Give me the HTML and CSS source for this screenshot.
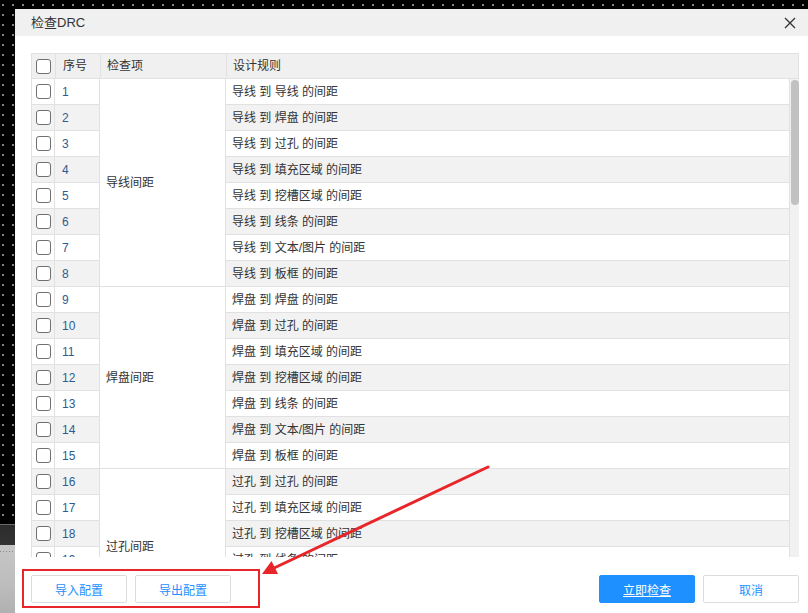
FILE: index.html
```html
<!DOCTYPE html>
<html lang="zh-CN">
<head>
<meta charset="utf-8">
<title>检查DRC</title>
<link rel="stylesheet" href="styles.css">
</head>
<body>
<div class="desk">
  <div class="lower-panel"><div class="dotline"></div></div>
  <div class="dialog">
    <div class="titlebar">
      <span class="title">检查DRC</span>
      <span class="close"><svg width="12" height="12" viewBox="0 0 12 12"><path d="M1 1L11 11M11 1L1 11" stroke="#333" stroke-width="1.3" fill="none"/></svg></span>
    </div>
    <div class="content">
      <div class="grid-wrap">
        <div class="head">
          <div class="cell chk"><span class="cb"></span></div>
          <div class="cell num-h">序号</div>
          <div class="cell">检查项</div>
          <div class="cell">设计规则</div>
        </div>
        <div class="body-row">
          <div class="clip">
            <div class="rows">
              <div class="cell chk"><span class="cb"></span></div><div class="cell num">1</div><div class="cell cat s8">导线间距</div><div class="cell rule">导线 到 导线 的间距</div>
              <div class="cell chk alt"><span class="cb"></span></div><div class="cell num alt">2</div><div class="cell rule alt">导线 到 焊盘 的间距</div>
              <div class="cell chk"><span class="cb"></span></div><div class="cell num">3</div><div class="cell rule">导线 到 过孔 的间距</div>
              <div class="cell chk alt"><span class="cb"></span></div><div class="cell num alt">4</div><div class="cell rule alt">导线 到 填充区域 的间距</div>
              <div class="cell chk"><span class="cb"></span></div><div class="cell num">5</div><div class="cell rule">导线 到 挖槽区域 的间距</div>
              <div class="cell chk alt"><span class="cb"></span></div><div class="cell num alt">6</div><div class="cell rule alt">导线 到 线条 的间距</div>
              <div class="cell chk"><span class="cb"></span></div><div class="cell num">7</div><div class="cell rule">导线 到 文本/图片 的间距</div>
              <div class="cell chk alt"><span class="cb"></span></div><div class="cell num alt">8</div><div class="cell rule alt">导线 到 板框 的间距</div>
              <div class="cell chk"><span class="cb"></span></div><div class="cell num">9</div><div class="cell cat s7">焊盘间距</div><div class="cell rule">焊盘 到 焊盘 的间距</div>
              <div class="cell chk alt"><span class="cb"></span></div><div class="cell num alt">10</div><div class="cell rule alt">焊盘 到 过孔 的间距</div>
              <div class="cell chk"><span class="cb"></span></div><div class="cell num">11</div><div class="cell rule">焊盘 到 填充区域 的间距</div>
              <div class="cell chk alt"><span class="cb"></span></div><div class="cell num alt">12</div><div class="cell rule alt">焊盘 到 挖槽区域 的间距</div>
              <div class="cell chk"><span class="cb"></span></div><div class="cell num">13</div><div class="cell rule">焊盘 到 线条 的间距</div>
              <div class="cell chk alt"><span class="cb"></span></div><div class="cell num alt">14</div><div class="cell rule alt">焊盘 到 文本/图片 的间距</div>
              <div class="cell chk"><span class="cb"></span></div><div class="cell num">15</div><div class="cell rule">焊盘 到 板框 的间距</div>
              <div class="cell chk alt"><span class="cb"></span></div><div class="cell num alt">16</div><div class="cell cat s6">过孔间距</div><div class="cell rule alt">过孔 到 过孔 的间距</div>
              <div class="cell chk"><span class="cb"></span></div><div class="cell num">17</div><div class="cell rule">过孔 到 填充区域 的间距</div>
              <div class="cell chk alt"><span class="cb"></span></div><div class="cell num alt">18</div><div class="cell rule alt">过孔 到 挖槽区域 的间距</div>
              <div class="cell chk"><span class="cb"></span></div><div class="cell num">19</div><div class="cell rule">过孔 到 线条 的间距</div>
              <div class="cell chk alt"><span class="cb"></span></div><div class="cell num alt">20</div><div class="cell rule alt">过孔 到 文本/图片 的间距</div>
              <div class="cell chk"><span class="cb"></span></div><div class="cell num">21</div><div class="cell rule">过孔 到 板框 的间距</div>
            </div>
          </div>
          <div class="scrollbar"><div class="thumb"></div></div>
        </div>
      </div>
      <div class="footer">
        <div class="btns">
          <button class="btn">导入配置</button>
          <button class="btn">导出配置</button>
        </div>
        <div class="btns">
          <button class="btn primary">立即检查</button>
          <button class="btn">取消</button>
        </div>
      </div>
    </div>
  </div>
  <div class="annot-box"></div>
  <svg class="annot-arrow" width="808" height="613" viewBox="0 0 808 613">
    <line x1="488" y1="467" x2="272" y2="569" stroke="#e8262a" stroke-width="3" stroke-linecap="round"/>
    <polygon points="262,574 278,574 271.5,561" fill="#e8262a"/>
  </svg>
</div>
</body>
</html>
```

FILE: styles.css
```css
* { box-sizing: border-box; }
html, body { margin: 0; padding: 0; }
body {
  width: 808px;
  height: 613px;
  overflow: hidden;
  font-family: "Liberation Sans", "Noto Sans CJK SC", sans-serif;
  font-size: 12px;
  color: #333;
}
.desk {
  position: relative;
  width: 808px;
  height: 613px;
  background-color: #000;
  background-image: radial-gradient(circle at 5px 5px, #9a9a9a 0.6px, rgba(0,0,0,0) 1.3px);
  background-size: 10px 10px;
  background-position: -2px 0;
  padding: 9px 0 0 15px;
}
.lower-panel {
  position: absolute;
  left: 0;
  top: 524px;
  width: 15px;
  height: 89px;
  border-top: 1px solid #6a6a6a;
  background: linear-gradient(#2c2c2c 0, #333 20px, #c6c6c6 20px, #bdbdbd 60px, #b0b0b0 89px);
}
.lower-panel .dotline {
  margin-top: 26px;
  height: 1px;
  background-image: linear-gradient(90deg, #888 1px, transparent 1px);
  background-size: 3px 1px;
}
.dialog {
  width: 793px;
  height: 604px;
  background: #fff;
  display: flex;
  flex-direction: column;
}
.titlebar {
  height: 27px;
  background: #f0f0f0;
  display: flex;
  align-items: center;
  justify-content: space-between;
  padding: 0 12px 0 16px;
}
.title {
  font-size: 13px;
  color: #333;
  line-height: 16px;
}
.close { display: flex; width: 12px; height: 12px; }
.content {
  padding: 17px 9px 0 16px;
}
.grid-wrap {
  width: 768px;
}
.head {
  display: grid;
  grid-template-columns: 24px 45px 126px 1fr;
  grid-auto-rows: 25px;
  border-top: 1px solid #e1e1e1;
  border-left: 1px solid #e1e1e1;
  background: #f0f0f0;
}
.cell {
  border-right: 1px solid #e1e1e1;
  border-bottom: 1px solid #e1e1e1;
  display: flex;
  align-items: center;
  padding-left: 6px;
  line-height: 16px;
  white-space: nowrap;
  color: #333;
}
.cell.chk {
  padding-left: 0;
  justify-content: center;
}
.cb {
  display: block;
  width: 15px;
  height: 15px;
  border: 1px solid #707070;
  border-radius: 3px;
  background: #fff;
}
.body-row {
  display: flex;
  height: 478px;
}
.clip {
  width: 759px;
  height: 478px;
  overflow: hidden;
  border-left: 1px solid #e1e1e1;
}
.rows {
  display: grid;
  grid-template-columns: 23px 45px 126px 1fr;
  grid-auto-rows: 26px;
}
.rows .chk { grid-column: 1; }
.rows .num { grid-column: 2; color: #2f5b8f; padding-left: 7px; }
.rows .cat { grid-column: 3; padding-left: 6px; }
.rows .rule { grid-column: 4; }
.rows .s8 { grid-row: span 8; }
.rows .s7 { grid-row: span 7; }
.rows .s6 { grid-row: span 6; }
.alt { background: #f2f2f2; }
.head .num-h { padding-left: 7px; }
.scrollbar {
  width: 9px;
  height: 478px;
  background: #f1f1f1;
  padding: 1px 1px 0 1px;
}
.thumb {
  width: 8px;
  height: 125px;
  background: #c1c1c1;
  border-radius: 4px;
}
.footer {
  margin-top: 18px;
  width: 768px;
  display: flex;
  justify-content: space-between;
}
.btns {
  display: flex;
  gap: 8px;
}
.btn {
  width: 96px;
  height: 28px;
  border: 1px solid #dcdcdc;
  border-radius: 2px;
  background: #fff;
  color: #1e90ff;
  font-family: "Liberation Sans", "Noto Sans CJK SC", sans-serif;
  font-size: 12px;
  padding: 0;
}
.btn.primary {
  background: #1e90ff;
  border-color: #1e90ff;
  color: #fff;
  text-decoration: underline;
}
.annot-box {
  position: absolute;
  left: 22px;
  top: 569px;
  width: 238px;
  height: 39px;
  border: 2px solid #e8262a;
}
.annot-arrow {
  position: absolute;
  left: 0;
  top: 0;
  pointer-events: none;
}
```
